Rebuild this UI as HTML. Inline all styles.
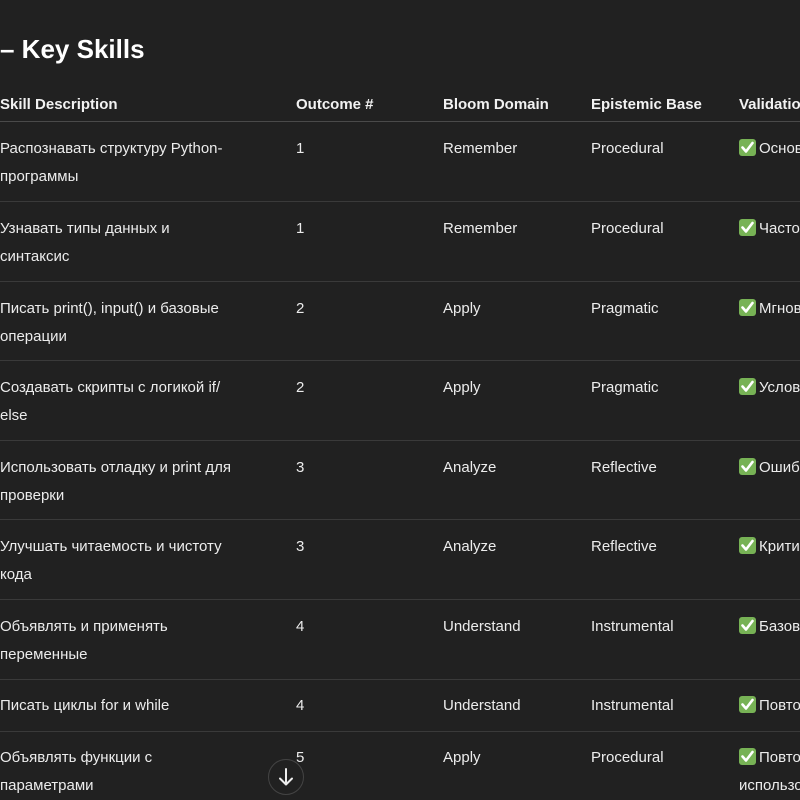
<!DOCTYPE html>
<html><head><meta charset="utf-8"><style>
html,body{margin:0;padding:0;background:#212121;width:800px;height:800px;overflow:hidden;}
body{position:relative;font-family:"Liberation Sans","DejaVu Sans",sans-serif;color:#ececec;font-size:15px;}
.t{position:absolute;white-space:nowrap;line-height:28px;}
.v{width:61px;overflow:hidden;}
h1{position:absolute;left:0;top:29px;margin:0;font-size:26px;font-weight:bold;color:#fff;line-height:40px;}
.h{font-weight:bold;color:#f2f2f2;}
.line{position:absolute;left:0;width:800px;height:1px;background:#3a3a3a;}
.ck{display:inline-block;vertical-align:-3px;margin-right:3px;}
</style></head><body>
<h1>– Key Skills</h1>
<div class="t h" style="left:0;top:91px">Skill Description</div>
<div class="t h" style="left:296px;top:91px">Outcome #</div>
<div class="t h" style="left:443px;top:91px">Bloom Domain</div>
<div class="t h" style="left:591px;top:91px">Epistemic Base</div>
<div class="t h v" style="left:739px;top:91px">Validation</div>
<div class="line" style="top:121px;background:#4a4a4a"></div>

<div id="rows"></div>
<script>
var rows=[
["Распознавать структуру Python-<br>программы","1","Remember","Procedural","Основы синтаксиса"],
["Узнавать типы данных и<br>синтаксис","1","Remember","Procedural","Частое применение"],
["Писать print(), input() и базовые<br>операции","2","Apply","Pragmatic","Мгновенный результат"],
["Создавать скрипты с логикой if/<br>else","2","Apply","Pragmatic","Условия везде"],
["Использовать отладку и print для<br>проверки","3","Analyze","Reflective","Ошибки неизбежны"],
["Улучшать читаемость и чистоту<br>кода","3","Analyze","Reflective","Критично для команды"],
["Объявлять и применять<br>переменные","4","Understand","Instrumental","Базовый навык"],
["Писать циклы for и while","4","Understand","Instrumental","Повторение действий"],
["Объявлять функции с<br>параметрами","5","Apply","Procedural","Повторное<br>использование"]
];
var tops=[135,215,295,374,454,533,613,692,744];
var lines=[201,281,360,440,519,599,679,731];
var ck='<svg class="ck" width="17" height="17" viewBox="0 0 17 17"><rect x="0" y="0" width="17" height="17" rx="3" fill="#77b255"/><path d="M3.5 8.5 L7 12.5 L13.5 4" stroke="#fff" stroke-width="2.6" fill="none" stroke-linecap="round" stroke-linejoin="round"/></svg>';
var h='';
rows.forEach(function(r,i){
 var t=tops[i];
 h+='<div class="t" style="left:0;top:'+t+'px">'+r[0]+'</div>';
 h+='<div class="t" style="left:296px;top:'+t+'px">'+r[1]+'</div>';
 h+='<div class="t" style="left:443px;top:'+t+'px">'+r[2]+'</div>';
 h+='<div class="t" style="left:591px;top:'+t+'px">'+r[3]+'</div>';
 h+='<div class="t v" style="left:739px;top:'+t+'px">'+ck+r[4]+'</div>';
});
lines.forEach(function(y){h+='<div class="line" style="top:'+y+'px"></div>';});
document.getElementById('rows').innerHTML=h;
</script>
<svg style="position:absolute;left:267px;top:758px" width="38" height="38" viewBox="0 0 38 38">
<circle cx="19" cy="19" r="17.5" fill="#212121" stroke="#444" stroke-width="1"/>
<path d="M19 11 V26 M13 20.5 L19 26.5 L25 20.5" stroke="#eee" stroke-width="2" fill="none" stroke-linecap="round" stroke-linejoin="round"/>
</svg>
</body></html>
